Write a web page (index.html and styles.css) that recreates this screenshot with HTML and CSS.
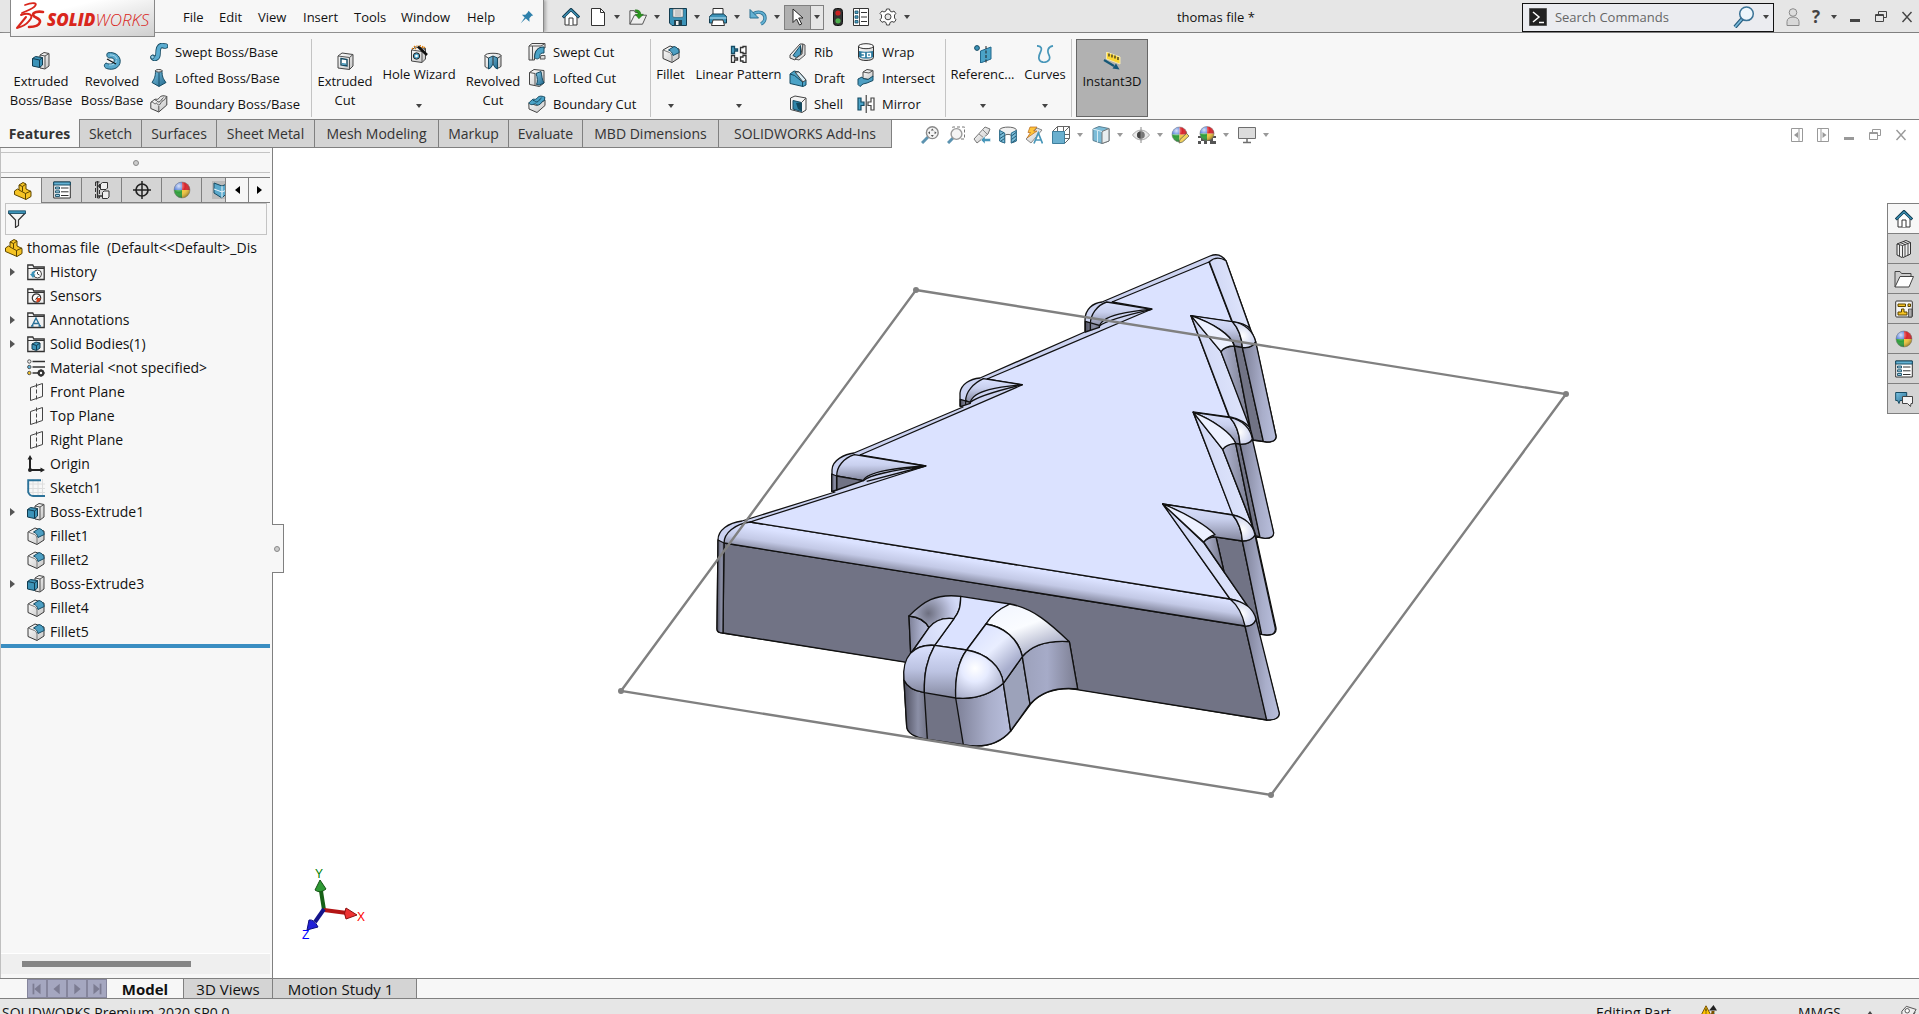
FILE: index.html
```html
<!DOCTYPE html>
<html lang="en">
<head>
<meta charset="utf-8">
<title>SOLIDWORKS - thomas file</title>
<link rel="stylesheet" href="styles.css">
</head>
<body>
<svg class="defs" aria-hidden="true">
  <defs>
    <linearGradient id="blue" x1="0" y1="0" x2="1" y2="1"><stop offset="0" stop-color="#7cc4e4"/><stop offset="1" stop-color="#22688c"/></linearGradient>
    <linearGradient id="grey" x1="0" y1="0" x2="1" y2="1"><stop offset="0" stop-color="#ffffff"/><stop offset="1" stop-color="#c4c4c4"/></linearGradient>
    <linearGradient id="logoBg" x1="0" y1="0" x2="1" y2="1"><stop offset=".3" stop-color="#ffffff"/><stop offset="1" stop-color="#cfcfcf"/></linearGradient>
    <radialGradient id="shine" cx=".3" cy=".25" r=".8"><stop offset="0" stop-color="#fff" stop-opacity=".8"/><stop offset=".5" stop-color="#fff" stop-opacity="0"/><stop offset="1" stop-color="#000" stop-opacity=".35"/></radialGradient>
  </defs>
  <symbol id="i-extrude" viewBox="0 0 18 18"><path d="M8 3l4-2.500 5 1v12.500l-4 3-5-1z" fill="url(#grey)" stroke="#444"/><path d="M13 4v12.500M8 3l5 1 4-2.500" fill="none" stroke="#555"/><path d="M.5 6.500l3-2 7 1v7.500l-3 2.500-7-1.500z" fill="#3c93b8" stroke="#123c50"/><path d="M.5 6.500l7 1.500 3-2.500M7.500 8v7.500" fill="none" stroke="#123c50"/></symbol>
  <symbol id="i-revolve" viewBox="0 0 18 18"><path d="M5 .8C12-.5 17.500 4 17.200 9.500 17 15 11 19 3.500 16.500c-2.500-1-3-4-.5-5.500 4 2 7 1 8-1.500.8-2.500-1-4-4.500-3.500C3.500 6 3 1.500 5 .8z" fill="#59a9cc" stroke="#164b63"/><path d="M6 13c4 .5 7-1.500 7.500-4.500M7 3c3-.3 6 1 7 4" fill="none" stroke="#a8d8ec"/><path d="M4 7l9 5" stroke="#111" stroke-width="1.200"/></symbol>
  <symbol id="i-swept" viewBox="0 0 18 18"><path d="M3 14.500c2 2 5 .5 5-3.500 0-5 .5-8 3.500-8.500 2-.3 2.500 1 4 .5" fill="none" stroke="#164b63" stroke-width="5.500" stroke-linecap="round"/><path d="M3 14.500c2 2 5 .5 5-3.500 0-5 .5-8 3.500-8.500 2-.3 2.500 1 4 .5" fill="none" stroke="#5bacd0" stroke-width="3.800" stroke-linecap="round"/><circle cx="2.500" cy="14" r="1.800" fill="#9ad1e8" stroke="#164b63" stroke-width=".7"/></symbol>
  <symbol id="i-loft" viewBox="0 0 18 18"><path d="M5.500 1.500h6.500c0 6 1 8 4 12l-7 4-7-4c2.500-4 3.500-6 3.500-12z" fill="url(#blue)" stroke="#164b63"/><ellipse cx="8.800" cy="1.800" rx="3.300" ry="1.300" fill="#eee" stroke="#444"/><path d="M9 4v13" stroke="#18506c"/></symbol>
  <symbol id="i-boundary" viewBox="0 0 18 18"><path d="M.8 7.500l3-2.500c2-2 3 .5 5-1.500 1.500-2.500 4-3.500 8-2v8.500l-8 7-8-3.500z" fill="url(#grey)" stroke="#444"/><path d="M.8 7.500c2-2 3.500 2.500 5 1s2 2.500 3.500 1.500 2-4 4-4.500 2-3 3.500-4M5 5c2-.5 2 2.500 4 2s2.500-3 4.500-4.500M8.800 11v6" fill="none" stroke="#555"/></symbol>
  <symbol id="i-excut" viewBox="0 0 18 18"><path d="M2 4l4-3 11 1.500V14l-3.500 3.500L2 16z" fill="url(#grey)" stroke="#444"/><path d="M2 4l11.500 1.500L17 2.500M13.500 5.500v12" fill="none" stroke="#555"/><path d="M5 6.500l6 1v6.500l-6-1z" fill="#fff" stroke="#164b63" stroke-width="1.400"/><path d="M6 11l4 .5v1.500l-4-.5z" fill="#3c93b8"/></symbol>
  <symbol id="i-hole" viewBox="0 0 18 18"><path d="M1.500 5l4-3 10 1.500V14L12 17.500 1.500 16z" fill="url(#grey)" stroke="#444"/><path d="M1.500 5L12 6.500l3.500-3M12 6.500v11" fill="none" stroke="#555"/><circle cx="6.500" cy="11" r="3.200" fill="#4ba3c7" stroke="#222"/><circle cx="6.500" cy="11" r="1.300" fill="#fff"/><path d="M8 1.500l9 8.500" stroke="#111" stroke-width="2.600"/><path d="M4 1l1 1M7 .5v1M10 0l.5 1.500M13 1l-1 2M2 3l1 1M5 4l1-1M14 3l1-1" stroke="#e07b00" stroke-width="1.300"/></symbol>
  <symbol id="i-revcut" viewBox="0 0 18 18"><path d="M1 3.500C1 .500 17 .500 17 3.500V14c0 1.500-3 2-4.500 2.500L9 9l-3.500 7.500C3 16 1 15.500 1 14z" fill="url(#grey)" stroke="#444"/><path d="M4.500 6L9 4l4.500 2v11L11 15.500 9 12l-2 3.500L4.500 17z" fill="url(#blue)" stroke="#164b63"/><path d="M9 4v8M1 3.500C2 5 4 6 4.500 6M17 3.500C16 5 14 6 13.500 6" fill="none" stroke="#333"/></symbol>
  <symbol id="i-swcut" viewBox="0 0 18 18"><path d="M1 17V3l3-2.500h13V5h-3v-.5C8 5 6.500 9 6.500 17z" fill="url(#grey)" stroke="#444"/><path d="M1 3h12l4-2.500M4.500 3v14" fill="none" stroke="#555"/><path d="M16 4C9.500 4 7 8 6.500 14.500c3 3 5.500.5 5.500-2 0-2 1-2.500 4-2.500z" fill="#4ba3c7" stroke="#164b63"/><path d="M13 12.500h4v3.500h-5z" fill="#ddd" stroke="#555"/></symbol>
  <symbol id="i-locut" viewBox="0 0 18 18"><path d="M1.500 3.500l4.500-3 10 1V14l-4.500 3.500-10-2z" fill="url(#grey)" stroke="#444"/><path d="M1.500 3.500L7 4.500v12" fill="none" stroke="#555"/><path d="M8 4.500l5-2c1 5 1 8 3 11.500l-4.500 2-3-.5c1.500-3 1-7-.5-11z" fill="url(#blue)" stroke="#164b63"/></symbol>
  <symbol id="i-bocut" viewBox="0 0 18 18"><path d="M.8 8l8 2.500L17 5v5.500l-8 7-8-3.500z" fill="url(#grey)" stroke="#444"/><path d="M.8 8l3-3c2-2 3 .5 5-1.500 1.500-2.500 4-3 8-1.500l-.3 3.500c-3 0-3 4-6 4.500-2 .5-2-1.500-4-1S3 10.500.8 8z" fill="#4ba3c7" stroke="#164b63"/><path d="M5 5.500c2-.5 2 2 4 1.500s2.500-3 4.500-4" fill="none" stroke="#164b63"/></symbol>
  <symbol id="i-fillet" viewBox="0 0 18 18"><path d="M1 5l7-4 9 3v9l-7 4.500L1 13.500z" fill="url(#grey)" stroke="#3a3a3a"/><path d="M1 5l6.500 2.500c1.500 1 2 2 2.500 3.500v6" fill="none" stroke="#777"/><path d="M6.500 5L12 1.500c3 .5 5 3 5.200 6L11 10.500C10.500 8 9 5.800 6.500 5z" fill="#4d9fc3" stroke="#164b63"/></symbol>
  <symbol id="i-pattern" viewBox="0 0 18 18"><path d="M1.500 1.500h3v2.500h3v2h-3v2.500h-3z" fill="#4ba3c7" stroke="#164b63" stroke-width="1.300"/><path d="M10.500 2.500h2.500v-1h3v7h-3v-1h-2.500zM1.500 10.500h3v2.500h3v2h-3v2.500h-3zM10.500 12h2.500v-1.500h3v7h-3V16h-2.500z" fill="#fff" stroke="#333" stroke-width="1.300"/></symbol>
  <symbol id="i-rib" viewBox="0 0 18 18"><path d="M1 12l10-11h3l-2 10-6 6-5-2z" fill="url(#grey)" stroke="#444"/><path d="M4 12.500L11.500 2.500v9l-4 3z" fill="#4d9fc3" stroke="#164b63"/><path d="M14 1l2 1v10l-6 5-4-1 7-5z" fill="#ddd" stroke="#555"/></symbol>
  <symbol id="i-draft" viewBox="0 0 18 18"><path d="M1 5l4-3 5 1 7 8v5l-3 1.500L1 14.500z" fill="#4ba3c7" stroke="#164b63"/><path d="M1 5l4.500 1.500L13.500 13v4.500" fill="none" stroke="#164b63"/><path d="M6 3l4 0 7 8-3 2z" fill="#d8ecf5" stroke="#444"/></symbol>
  <symbol id="i-shell" viewBox="0 0 18 18"><path d="M1.500 3L6 1l11 2v12l-4 2.500L1.500 14.500z" fill="#f4f4f4" stroke="#444"/><path d="M4 5.500l8.500 2v9L4 14z" fill="#2f86ab" stroke="#164b63"/><path d="M7 8l5.500-.5V16L9 14z" fill="#12495f"/><path d="M12.500 7.500L17 3" stroke="#555"/></symbol>
  <symbol id="i-wrap" viewBox="0 0 18 18"><path d="M1.500 3v11.500c0 4 15 4 15 0V3" fill="url(#grey)" stroke="#333"/><ellipse cx="9" cy="3.200" rx="7.500" ry="2.500" fill="#fafafa" stroke="#333"/><path d="M2 8c4 1 10 1 14 0v6c-4 2-10 2-14 0z" fill="#2b7a9f"/><path d="M4.500 10.500h3v3h-3M10.500 10.500h3v3h-3z" fill="none" stroke="#fff" stroke-width="1.300"/></symbol>
  <symbol id="i-intersect" viewBox="0 0 18 18"><path d="M6 3l4-2.500 6 1v6l-4 3-6-1z" fill="url(#grey)" stroke="#444"/><path d="M1 10l4-2 1 1.500 5 1L16 7v4.500l-6 2.500-4 1-3 2.500-2-2z" fill="#4d9fc3" stroke="#164b63"/><path d="M6 3l6 1 4-2.500" fill="none" stroke="#555"/></symbol>
  <symbol id="i-mirror" viewBox="0 0 18 18"><path d="M1 3h3v4h3v3.500H4V15H1z" fill="#4ba3c7" stroke="#164b63" stroke-width="1.200"/><path d="M9.200 0v18" stroke="#222"/><path d="M17 3h-3v4h-3v3.500h3V15h3z" fill="#fff" stroke="#444" stroke-width="1.200"/></symbol>
  <symbol id="i-reference" viewBox="0 0 18 18"><circle cx="3" cy="3" r="2.400" fill="#3c93b8" stroke="#164b63"/><path d="M6.500 6L17 2v12l-10.500 4z" fill="#4ba3c7" stroke="#22688c"/><path d="M12 1v17" stroke="#222" stroke-dasharray="3 1.500"/></symbol>
  <symbol id="i-curves" viewBox="0 0 18 18"><path d="M1 .800c5 .2 5 3.200 3.500 6.200C2 12 2 16.500 7 17.200c5 .5 8-3 6-7-2-4-1.500-8.400 4-9.400" fill="none" stroke="#4796b9" stroke-width="1.700"/></symbol>
  <symbol id="i-instant" viewBox="0 0 18 18"><path d="M3.500 0L17 5v7L3.500 7z" fill="#ffd934" stroke="#f5e9b0"/><path d="M6 1.500v3M9 2.500v3M12 3.500v3M15 5v3" stroke="#222" stroke-width="1.200"/><path d="M1 8l10 6" stroke="#165877" stroke-width="2.200"/><path d="M16.500 17.500l-7-1 3.500-5z" fill="#165877"/></symbol>
  <symbol id="i-home" viewBox="0 0 18 18"><path d="M3 8v9h12V8L9 2.500z" fill="#fff" stroke="#333"/><path d="M7 17v-7h4v7" fill="#fff" stroke="#333"/><path d="M.8 9.500L9 1.500l8.200 8" fill="none" stroke="#123c50" stroke-width="3"/><path d="M1.500 9L9 1.800 16.500 9" fill="none" stroke="#3c93b8" stroke-width="1.300"/></symbol>
  <symbol id="i-new" viewBox="0 0 18 18"><path d="M2.500.5h9l4 4v13h-13z" fill="#fff" stroke="#333"/><path d="M11.500.5v4h4" fill="none" stroke="#333"/></symbol>
  <symbol id="i-open" viewBox="0 0 20 18"><path d="M1 17V2h5l1 2h5v3" fill="#f2f2f2" stroke="#444"/><path d="M1 17L6 7h13.500L15 17z" fill="#eee" stroke="#444"/><path d="M7 1c4 0 6 1.500 6 5h3l-5 5-4-5h3c0-2-1-3-3-3z" fill="#2b9a1e" stroke="#16660e" stroke-width=".6"/></symbol>
  <symbol id="i-save" viewBox="0 0 18 18"><path d="M.5.5h17v17H3L.5 15z" fill="#3c93b8" stroke="#123c50"/><path d="M4 1h10v8H4z" fill="#fff" stroke="#555" stroke-width=".6"/><path d="M5.500 3h7M5.500 5h7M5.500 7h7" stroke="#777" stroke-width=".8"/><path d="M5 12h8v5.500H5z" fill="#23424f"/><path d="M7 13h2.500v4H7z" fill="#eee"/></symbol>
  <symbol id="i-print" viewBox="0 0 18 18"><path d="M4 .5h10v7H4z" fill="#fff" stroke="#333"/><path d="M.5 8.500L3.500 6h11l3 2.500V15H.5z" fill="#3c93b8" stroke="#123c50"/><path d="M.5 10h17" stroke="#bfe3f2"/><path d="M4 12h10l1.500 5.500h-13z" fill="#fff" stroke="#333"/></symbol>
  <symbol id="i-undo" viewBox="0 0 18 18"><path d="M4 6c6-4 12-1 12 4 0 3-2 5-4 6" fill="none" stroke="#2b6f90" stroke-width="3.400"/><path d="M4 6c6-4 12-1 12 4 0 3-2 5-4 6" fill="none" stroke="#63b1d3" stroke-width="1.800"/><path d="M1 1.500V10h8.500z" fill="#63b1d3" stroke="#2b6f90"/></symbol>
  <symbol id="i-cursor" viewBox="0 0 18 18"><path d="M4 1v13.500l3.500-3.500 3 6 2.200-1-3-6H14z" fill="#fff" stroke="#222"/></symbol>
  <symbol id="i-traffic" viewBox="0 0 10 18"><rect x=".5" y=".5" width="9" height="17" rx="3" fill="#333" stroke="#111"/><circle cx="5" cy="5" r="2.600" fill="#c22"/><circle cx="5" cy="12.800" r="2.600" fill="#4fb04f"/></symbol>
  <symbol id="i-list" viewBox="0 0 18 18"><path d="M1.500.5h15v17h-15z" fill="#fff" stroke="#333"/><path d="M7.500 1v16" stroke="#555"/><path d="M3 3h3v2.500H3zM3 7.800h3v2.500H3zM3 12.500h3V15H3z" fill="#4ba3c7" stroke="#164b63" stroke-width=".8"/><path d="M9 4.500h6M9 9h6M9 13.500h6" stroke="#333"/></symbol>
  <symbol id="i-gear" viewBox="0 0 18 18"><path d="M7.500 1h3l.5 2 2 1 2-1 1.800 2.500L15.500 7v3l1.500 1.800-1.800 2.500-2.200-.8-2 1-.5 2.500h-3L7 14.500l-2-1-2 .8-2-2.500L2.500 10V7L1 5.500 3 3l2 1 2-1z" fill="#fff" stroke="#444"/><circle cx="9" cy="8.800" r="3" fill="#e6e6e6" stroke="#444"/></symbol>
  <symbol id="i-pin" viewBox="0 0 18 18"><path d="M11 1l6 6-2 .5-3 3 .2 4.500L7.500 11 1 17l5-7.500L2.500 6 7 6l3-3z" fill="#2e80ab"/></symbol>
  <symbol id="i-prompt" viewBox="0 0 18 18"><path d="M.5.5h17v17H.5z" fill="#222" stroke="#555"/><path d="M4 4l6 5-6 5" fill="none" stroke="#fff" stroke-width="1.500"/><path d="M10 14.500h5" stroke="#fff" stroke-width="1.500"/></symbol>
  <symbol id="i-search" viewBox="0 0 22 22"><path d="M9 13l-7 8" stroke="#24597a" stroke-width="4"/><path d="M9 13l-7 8" stroke="#79b9da" stroke-width="1.800"/><circle cx="13.500" cy="7.800" r="6.800" fill="#eef6fb" stroke="#3b7396" stroke-width="1.500"/></symbol>
  <symbol id="i-user" viewBox="0 0 14 18"><circle cx="7" cy="4.500" r="3.800" fill="#ddd" stroke="#8a8a8a"/><path d="M1 17.500v-4c0-6 12-6 12 0v4z" fill="#d8d8d8" stroke="#8a8a8a"/></symbol>
  <symbol id="i-min" viewBox="0 0 12 12"><path d="M1 9.500h10" stroke="currentColor" stroke-width="3"/></symbol>
  <symbol id="i-restore" viewBox="0 0 12 12"><path d="M3.500 3.500v-3h8v6h-3M.5 3.500h8v7h-8zM.5 4.500h8" fill="none" stroke="currentColor"/></symbol>
  <symbol id="i-close" viewBox="0 0 12 12"><path d="M1.500 1l9 10M10.500 1l-9 10" stroke="currentColor" stroke-width="1.400"/></symbol>
  <symbol id="i-zoomfit" viewBox="0 0 18 18"><path d="M7 11l-6 6" stroke="#5c93b0" stroke-width="3"/><circle cx="11.300" cy="6.700" r="5.900" fill="#f4f4f4" stroke="#8a8a8a" stroke-width="1.400"/><path d="M11.300 2.500l1.500 2h-3zM11.300 11l1.500-2h-3zM7 6.700l2-1.500v3zM15.600 6.700l-2-1.500v3z" fill="#555"/></symbol>
  <symbol id="i-zoomarea" viewBox="0 0 18 18"><path d="M5.500 1.500V1h12v12H14" fill="none" stroke="#777" stroke-dasharray="3 2"/><path d="M6 12l-5 5" stroke="#5c93b0" stroke-width="3"/><circle cx="9.500" cy="8" r="5.400" fill="#f4f4f4" stroke="#999" stroke-width="1.400"/></symbol>
  <symbol id="i-prev" viewBox="0 0 18 18"><path d="M1 13L12 1l5 2-2 5-11 9z" fill="url(#grey)" stroke="#777"/><path d="M6 8l5 4M10 4l4 4" stroke="#888"/><path d="M8 14l4-4v2.500h5.500v3H12V18z" fill="#4796b9" stroke="#fff" stroke-width=".5"/></symbol>
  <symbol id="i-section" viewBox="0 0 18 18"><path d="M.7 3.500C3 .3 15 .3 17.300 3.500V15l-5 2V9.500c-1-1.500-5.600-1.500-6.600 0V17l-5-2z" fill="#f1f1f1" stroke="#666"/><path d="M.7 4.500l5 2.500v10l-5-2zM17.300 4.500l-5 2.500v10l5-2z" fill="#7bbdd9" stroke="#2b6f90"/><path d="M1 9l4-2.500M1 12.500l4.500-3M2 15l3.500-2.500M12.500 10L17 6.500M12.500 13.500L17 10M13 16.500l4-3" stroke="#245a74"/></symbol>
  <symbol id="i-annot" viewBox="0 0 18 18"><path d="M1 13L12 2l5 2-11 13z" fill="url(#grey)" stroke="#888"/><path d="M5 1h7L8.500 5H12L2 12l3.500-5.500H3z" fill="#ffc53a" stroke="#b5651d" stroke-width=".7"/><path d="M9 17.500L13.300 7 17.500 17.500M10.500 14h5.500" fill="none" stroke="#4796b9" stroke-width="1.700"/></symbol>
  <symbol id="i-orient" viewBox="0 0 18 18"><path d="M5.500 5.500V.5h12v12h-5M.5 5.500l5-5M12.500 5.500l5-5M12.500 17.500l5-5M11.500 0v18M6 8.500h12" fill="none" stroke="#666"/><path d="M.5 5.500h12v12H.5z" fill="#6bb0cf" stroke="#3f7f9d"/></symbol>
  <symbol id="i-display" viewBox="0 0 18 18"><path d="M1 3l6-2.500 10 2V15l-7 2.500-9-3z" fill="#7cbcd8" stroke="#5b7f90"/><path d="M10 5.500l7-3V15l-7 2.500z" fill="#e9eef0" stroke="#777"/><path d="M1 3l9 2.500M5.500 4.500v12" fill="none" stroke="#d5ecf5"/></symbol>
  <symbol id="i-eye" viewBox="0 0 18 18"><path d="M.5 9C5 2.500 13 2.500 17.500 9 13 15.500 5 15.500.5 9z" fill="#e9e9e9" stroke="#aaa"/><circle cx="9" cy="9" r="3.800" fill="#777"/><path d="M9 1v16" stroke="#888"/><path d="M8.500 5.500a3.500 3.500 0 000 7z" fill="#444"/></symbol>
  <symbol id="i-ball" viewBox="0 0 18 18"><path d="M9 9V1A8 8 0 001 9z" fill="#3f6fd8"/><path d="M9 9H1a8 8 0 008 8z" fill="#2f9e3a"/><path d="M9 9v8a8 8 0 008-8z" fill="#f2c63c"/><path d="M9 9h8a8 8 0 00-8-8z" fill="#d8232a"/><circle cx="9" cy="9" r="8" fill="url(#shine)" stroke="#777" stroke-width=".5"/></symbol>
  <symbol id="i-ballpen" viewBox="0 0 18 18"><use href="#i-ball" width="17" height="17"/><path d="M8 17l1-3.500 6.500-6L18 10l-6.500 6z" fill="#f4d35e" stroke="#665" stroke-width=".8"/></symbol>
  <symbol id="i-scene" viewBox="0 0 18 18"><path d="M0 10h18v8H0z" fill="#555"/><path d="M0 12h3v3H0zM15 12h3v3h-3zM3 15h3v3H3zM9 15h3v3H9z" fill="#fff"/><use href="#i-ball" x="1" y="-.5" width="16" height="16"/></symbol>
  <symbol id="i-monitor" viewBox="0 0 18 18"><path d="M.5 1.500h17v11H.5z" fill="#dcdcdc" stroke="#6e6e6e"/><path d="M9 13v3.500M5 16.500h8" stroke="#6e6e6e" stroke-width="1.500"/></symbol>
  <symbol id="i-panel-l" viewBox="0 0 12 14"><path d="M.5.5h11v13H.5zM8 .500v13" fill="none" stroke="#999"/><path d="M7 4v6L3 7z" fill="#999"/></symbol>
  <symbol id="i-panel-r" viewBox="0 0 12 14"><path d="M.5.5h11v13H.5zM4 .500v13" fill="none" stroke="#999"/><path d="M5.500 4v6l4-3z" fill="#999"/></symbol>
  <symbol id="i-part" viewBox="0 0 18 18"><path d="M.5 9l3-2 1.500.8V3l4-2.500 3 1.500v5l5 2.500v5L12 17.500.5 12.500z" fill="#f5c324" stroke="#5d4500"/><path d="M5 8l6.500 3.500v6M11.500 11.500L17 9M5 3l3.500 1.500v5M8.500 4.500L12 2" fill="none" stroke="#5d4500"/></symbol>
  <symbol id="i-props" viewBox="0 0 18 18"><path d="M.7 1h16.600v16H.7z" fill="#fff" stroke="#333"/><path d="M.7 1h16.600v3H.7z" fill="#63b1d3" stroke="#164b63"/><path d="M2.500 6h4v2h-4zM2.500 9.800h4v2h-4zM2.500 13.500h4v2h-4z" fill="#9bd0e6" stroke="#164b63" stroke-width=".9"/><path d="M8 7h7.500M8 10.800h7.500M8 14.500h7.500" stroke="#333"/></symbol>
  <symbol id="i-config" viewBox="0 0 18 18"><path d="M4.500 0v17M4 5h4M4 15h6" fill="none" stroke="#333" stroke-width="1.400"/><path d="M7.500 3l2-1.500h5V7l-1.500 1.500H7.500zM9.500 11.500l1.500-1.500h5v6l-1.500 1.500h-5z" fill="#eee" stroke="#333"/><path d="M2.500 1h4v16h-4z" fill="none" stroke="#333" stroke-dasharray="4 2"/></symbol>
  <symbol id="i-target" viewBox="0 0 18 18"><circle cx="9" cy="9" r="6" fill="none" stroke="#222" stroke-width="1.700"/><path d="M9 0v18M0 9h18" stroke="#222" stroke-width="1.500"/></symbol>
  <symbol id="i-cam" viewBox="0 0 18 18"><path d="M0 0h18v18H0z" fill="#bbb"/><path d="M2 2l8 3 7-3v8l-7 7-8-5z" fill="#5aa9cc" stroke="#164b63"/><path d="M2 8l8 3 7-3M10 5v12" fill="none" stroke="#e8f4fa"/></symbol>
  <symbol id="i-filter" viewBox="0 0 18 18"><path d="M.7 3L7.500 10v7.500l3-2V10L17.300 3z" fill="#f4f4f4" stroke="#333" stroke-width="1.200"/><path d="M.5.800h17v2.700H.5z" fill="#3c93b8" stroke="#164b63" stroke-width=".8"/></symbol>
  <symbol id="i-folder" viewBox="0 0 18 18"><path d="M.8 16.500V2h5l1 2h10.400v12.500z" fill="#f2f2f2" stroke="#333" stroke-width="1.300"/><path d="M1 5.500h16" stroke="#333"/></symbol>
  <symbol id="i-history" viewBox="0 0 18 18"><use href="#i-folder" width="18" height="18"/><circle cx="10.500" cy="11" r="4" fill="#fff" stroke="#444"/><path d="M10.500 9v2l2 1" fill="none" stroke="#444"/><path d="M3 11l3 4 2.500-3.500H7c0-2 1-3 2-3.500-3-.5-5 1-4.500 3z" fill="#3c93b8"/></symbol>
  <symbol id="i-sensor" viewBox="0 0 18 18"><use href="#i-folder" width="18" height="18"/><circle cx="9.500" cy="11" r="4.200" fill="#fff" stroke="#333" stroke-width="1.200"/><path d="M9.500 11l4.200 0a4.200 4.200 0 01-4.200 4.200z" fill="#e0431c"/><path d="M8.500 12.500l3-3.500" stroke="#222"/></symbol>
  <symbol id="i-annotations" viewBox="0 0 18 18"><use href="#i-folder" width="18" height="18"/><path d="M5 15L9 7l4 8M6.500 12.500h5M4 15h2.500M11.500 15H14" fill="none" stroke="#2b7299" stroke-width="1.400"/></symbol>
  <symbol id="i-bodies" viewBox="0 0 18 18"><use href="#i-folder" width="18" height="18"/><path d="M5 9l4-2 4 1v5l-3.500 2.500L5 14z" fill="#3c93b8" stroke="#123c50"/><path d="M5 9l4.500 1.500L13 8M9.500 10.500V15" fill="none" stroke="#123c50"/></symbol>
  <symbol id="i-material" viewBox="0 0 18 18"><path d="M5.500 2.500H18M5.500 8H18M5.500 14H11" stroke="#333" stroke-width="1.700"/><circle cx="2.300" cy="2.500" r="1.700" fill="#eee" stroke="#555"/><circle cx="2.300" cy="8" r="1.700" fill="#5bb5dd" stroke="#555"/><circle cx="2.300" cy="14" r="1.700" fill="#f5c324" stroke="#555"/><circle cx="14" cy="14" r="2.300" fill="none" stroke="#333" stroke-width="2.200"/><path d="M14 10v8M10 14h8" stroke="#333" stroke-dasharray="2 4"/></symbol>
  <symbol id="i-plane" viewBox="0 0 18 18"><path d="M3.500 4.500l12-4v13l-12 4z" fill="none" stroke="#444"/><path d="M9.500.500v17.500" stroke="#444" stroke-dasharray="4 2"/></symbol>
  <symbol id="i-origin" viewBox="0 0 18 18"><path d="M3 3v12h13" fill="none" stroke="#222" stroke-width="2"/><path d="M3 0l2.500 4.500h-5zM18 15l-4.500-2.500v5z" fill="#222"/><circle cx="3" cy="15" r="2" fill="#222"/></symbol>
  <symbol id="i-sketch" viewBox="0 0 18 18"><path d="M6 0v18M11 0v18M15.500 0v18M0 5h18M0 9.500h18M0 13.500h18" stroke="#dedede"/><path d="M14 1.200H1.200V13c1 3 3 4 5 4H18" fill="none" stroke="#2b7299" stroke-width="1.900"/></symbol>
  <symbol id="i-books" viewBox="0 0 18 18"><path d="M2 4l9-3.500 4.500 2V14l-8 3.800L2 15z" fill="#eee" stroke="#333"/><path d="M2 4l5.500 1.500 8-3M5 2.500l5 2v12M8 1.500l5 2v12M7.500 5.500V17M4.500 5v11" fill="none" stroke="#333" stroke-width=".9"/></symbol>
  <symbol id="i-explorer" viewBox="0 0 20 18"><path d="M1 17V1.500h5l1.500 2H17V7" fill="#ccc" stroke="#444"/><path d="M1 17L6 6.500h13.500L15 17z" fill="#fff" stroke="#444"/></symbol>
  <symbol id="i-palette" viewBox="0 0 18 18"><rect x=".7" y="1" width="16.600" height="16" rx="1" fill="#f4f4f4" stroke="#333"/><path d="M3 4h7.500v2.500H3zM13 4h2.500v2.500H13zM6.500 9h2.500v3h3v3H3v-3h3.500z" fill="#f5c324" stroke="#5d4500"/><path d="M13.500 9h3.500v8h-3.500z" fill="#aaa" stroke="#333" stroke-width=".7"/></symbol>
  <symbol id="i-forum" viewBox="0 0 18 18"><path d="M.7 2.500h11v8H5L4 13.500 2.500 10.500H.7z" fill="url(#blue)" stroke="#164b63"/><path d="M7.500 6.500h10v7H16l-.5 3-3-3h-5z" fill="#f4f4f4" stroke="#444"/></symbol>
  <symbol id="i-warn" viewBox="0 0 16 16"><path d="M.5 9.500L5 .800l4.500 8.700z" fill="#ffc400" stroke="#7a5200"/><path d="M5 3.500v3M5 7.500v1" stroke="#111"/><path d="M1 12c7 2 11 0 11-6" fill="none" stroke="#7a5200" stroke-width="3"/><path d="M8 5.500L12.500 0 16 5.500z" fill="#222"/><path d="M10 11l4-3v6z" fill="#3c93b8"/></symbol>
  <symbol id="i-tag" viewBox="0 0 18 16"><path d="M1 6l5-5.500L17 4l-6 10L1 9.500z" fill="#eee" stroke="#444"/><circle cx="7" cy="5.500" r="2.500" fill="#fff" stroke="#444"/><path d="M1 9.500v3l9 3.500 6-9" fill="none" stroke="#444"/></symbol>
</svg>

<div class="app">
  <header class="title-bar">
    <div class="menu-side">
      <div class="logo">
        <svg viewBox="0 0 143 36" role="img" aria-label="DS SOLIDWORKS logo">
          <path d="M0 0h143v36H0z" fill="url(#logoBg)"/>
          <g fill="none" stroke="#d9261c" stroke-linecap="round" stroke-linejoin="round">
            <path d="M14 5C22 2 27 3 24 6 22 9 15 11 11 13" stroke-width="1.800"/>
            <path d="M10 15C18 12 24 15 18 21 15 25 10 27 6 28L15 17" stroke-width="2"/>
            <path d="M32 12C27 11 22 12 22 15 23 18 30 18 29 22 28 26 23 27 18 27" stroke-width="2.600"/>
          </g>
          <text x="36" y="26" class="logo-text"><tspan class="logo-bold">SOLID</tspan>WORKS</text>
        </svg>
      </div>
      <nav class="menus">
        <button>File</button><button>Edit</button><button>View</button><button>Insert</button><button>Tools</button><button>Window</button><button>Help</button>
      </nav>
      <button class="pin" aria-label="Pin menu"><svg class="ic14"><use href="#i-pin"/></svg></button>
    </div>
    <div class="quick">
      <button aria-label="Home"><svg class="ic"><use href="#i-home"/></svg></button>
      <button aria-label="New" class="drop"><svg class="ic"><use href="#i-new"/></svg><i class="caret"></i></button>
      <button aria-label="Open" class="drop"><svg class="ic"><use href="#i-open"/></svg><i class="caret"></i></button>
      <button aria-label="Save" class="drop"><svg class="ic"><use href="#i-save"/></svg><i class="caret"></i></button>
      <button aria-label="Print" class="drop"><svg class="ic"><use href="#i-print"/></svg><i class="caret"></i></button>
      <button aria-label="Undo" class="drop"><svg class="ic"><use href="#i-undo"/></svg><i class="caret"></i></button>
      <button aria-label="Select" class="select-tool"><span><svg class="ic"><use href="#i-cursor"/></svg></span><i class="caret"></i></button>
      <button aria-label="Rebuild"><svg class="ic10"><use href="#i-traffic"/></svg></button>
      <button aria-label="File properties"><svg class="ic"><use href="#i-list"/></svg></button>
      <button aria-label="Options" class="drop"><svg class="ic"><use href="#i-gear"/></svg><i class="caret"></i></button>
    </div>
    <h1 class="doc-title">thomas file *</h1>
    <div class="title-right">
      <form class="search">
        <svg class="ic"><use href="#i-prompt"/></svg>
        <input type="text" placeholder="Search Commands" aria-label="Search Commands">
        <button type="button" aria-label="Search"><svg class="ic22"><use href="#i-search"/></svg><i class="caret"></i></button>
      </form>
      <button aria-label="Account"><svg class="user"><use href="#i-user"/></svg></button>
      <button class="help" aria-label="Help">?<i class="caret"></i></button>
      <div class="win-controls">
        <button aria-label="Minimize"><svg class="ic12"><use href="#i-min"/></svg></button>
        <button aria-label="Restore"><svg class="ic12"><use href="#i-restore"/></svg></button>
        <button aria-label="Close"><svg class="ic12"><use href="#i-close"/></svg></button>
      </div>
    </div>
  </header>

  <section class="ribbon" aria-label="Features ribbon">
    <div class="group boss">
      <button class="big"><svg class="ic"><use href="#i-extrude"/></svg>Extruded<br>Boss/Base</button>
      <button class="big"><svg class="ic"><use href="#i-revolve"/></svg>Revolved<br>Boss/Base</button>
      <div class="stack">
        <button><svg class="ic"><use href="#i-swept"/></svg>Swept Boss/Base</button>
        <button><svg class="ic"><use href="#i-loft"/></svg>Lofted Boss/Base</button>
        <button><svg class="ic"><use href="#i-boundary"/></svg>Boundary Boss/Base</button>
      </div>
    </div>
    <div class="group cut">
      <button class="big"><svg class="ic"><use href="#i-excut"/></svg>Extruded<br>Cut</button>
      <button class="big menu"><svg class="ic"><use href="#i-hole"/></svg>Hole Wizard<i class="caret"></i></button>
      <button class="big"><svg class="ic"><use href="#i-revcut"/></svg>Revolved<br>Cut</button>
      <div class="stack">
        <button><svg class="ic"><use href="#i-swcut"/></svg>Swept Cut</button>
        <button><svg class="ic"><use href="#i-locut"/></svg>Lofted Cut</button>
        <button><svg class="ic"><use href="#i-bocut"/></svg>Boundary Cut</button>
      </div>
    </div>
    <div class="group modify">
      <button class="big menu"><svg class="ic"><use href="#i-fillet"/></svg>Fillet<i class="caret"></i></button>
      <button class="big menu"><svg class="ic"><use href="#i-pattern"/></svg>Linear Pattern<i class="caret"></i></button>
      <div class="stack">
        <button><svg class="ic"><use href="#i-rib"/></svg>Rib</button>
        <button><svg class="ic"><use href="#i-draft"/></svg>Draft</button>
        <button><svg class="ic"><use href="#i-shell"/></svg>Shell</button>
      </div>
      <div class="stack">
        <button><svg class="ic"><use href="#i-wrap"/></svg>Wrap</button>
        <button><svg class="ic"><use href="#i-intersect"/></svg>Intersect</button>
        <button><svg class="ic"><use href="#i-mirror"/></svg>Mirror</button>
      </div>
    </div>
    <div class="group refs">
      <button class="big menu"><svg class="ic"><use href="#i-reference"/></svg>Referenc...<i class="caret"></i></button>
      <button class="big menu"><svg class="ic"><use href="#i-curves"/></svg>Curves<i class="caret"></i></button>
    </div>
    <button class="big instant" aria-pressed="true"><svg class="ic"><use href="#i-instant"/></svg>Instant3D</button>
  </section>

  <div class="tab-row">
    <nav class="tabs">
      <button class="active">Features</button><button>Sketch</button><button>Surfaces</button><button>Sheet Metal</button><button>Mesh Modeling</button><button>Markup</button><button>Evaluate</button><button>MBD Dimensions</button><button>SOLIDWORKS Add-Ins</button>
    </nav>
    <div class="view-tools">
      <button aria-label="Zoom to fit"><svg class="ic"><use href="#i-zoomfit"/></svg></button>
      <button aria-label="Zoom to area"><svg class="ic"><use href="#i-zoomarea"/></svg></button>
      <button aria-label="Previous view"><svg class="ic"><use href="#i-prev"/></svg></button>
      <button aria-label="Section view"><svg class="ic"><use href="#i-section"/></svg></button>
      <button aria-label="Annotation views"><svg class="ic"><use href="#i-annot"/></svg></button>
      <button aria-label="View orientation" class="drop"><svg class="ic"><use href="#i-orient"/></svg><i class="caret"></i></button>
      <button aria-label="Display style" class="drop"><svg class="ic"><use href="#i-display"/></svg><i class="caret"></i></button>
      <button aria-label="Hide or show items" class="drop"><svg class="ic"><use href="#i-eye"/></svg><i class="caret"></i></button>
      <button aria-label="Edit appearance"><svg class="ic"><use href="#i-ballpen"/></svg></button>
      <button aria-label="Apply scene" class="drop"><svg class="ic"><use href="#i-scene"/></svg><i class="caret"></i></button>
      <button aria-label="View settings" class="drop"><svg class="ic"><use href="#i-monitor"/></svg><i class="caret"></i></button>
    </div>
    <div class="doc-controls">
      <button aria-label="Expand left"><svg class="ic12 tall"><use href="#i-panel-l"/></svg></button>
      <button aria-label="Expand right"><svg class="ic12 tall"><use href="#i-panel-r"/></svg></button>
      <button aria-label="Minimize document"><svg class="ic12"><use href="#i-min"/></svg></button>
      <button aria-label="Restore document"><svg class="ic12"><use href="#i-restore"/></svg></button>
      <button aria-label="Close document"><svg class="ic12"><use href="#i-close"/></svg></button>
    </div>
  </div>

  <main class="workspace">
    <aside class="tree-panel">
      <div class="handle"><i class="dot"></i></div>
      <nav class="panel-tabs">
        <button class="active" aria-label="Feature tree"><svg class="ic"><use href="#i-part"/></svg></button>
        <button aria-label="Properties"><svg class="ic"><use href="#i-props"/></svg></button>
        <button aria-label="Configurations"><svg class="ic"><use href="#i-config"/></svg></button>
        <button aria-label="Dimensions"><svg class="ic"><use href="#i-target"/></svg></button>
        <button aria-label="Display"><svg class="ic"><use href="#i-ball"/></svg></button>
        <button class="clipped" aria-label="CAM"><svg class="ic"><use href="#i-cam"/></svg></button>
        <button class="nudge" aria-label="Previous tabs"><i class="tri left"></i></button>
        <button class="nudge" aria-label="Next tabs"><i class="tri right"></i></button>
      </nav>
      <label class="filter"><svg class="ic"><use href="#i-filter"/></svg><input type="text" aria-label="Filter tree"></label>
      <div class="tree-root"><svg class="ic"><use href="#i-part"/></svg>thomas file&nbsp; (Default&lt;&lt;Default&gt;_Dis</div>
      <ul class="tree">
        <li class="more"><svg class="ic"><use href="#i-history"/></svg>History</li>
        <li><svg class="ic"><use href="#i-sensor"/></svg>Sensors</li>
        <li class="more"><svg class="ic"><use href="#i-annotations"/></svg>Annotations</li>
        <li class="more"><svg class="ic"><use href="#i-bodies"/></svg>Solid Bodies(1)</li>
        <li><svg class="ic"><use href="#i-material"/></svg>Material &lt;not specified&gt;</li>
        <li><svg class="ic"><use href="#i-plane"/></svg>Front Plane</li>
        <li><svg class="ic"><use href="#i-plane"/></svg>Top Plane</li>
        <li><svg class="ic"><use href="#i-plane"/></svg>Right Plane</li>
        <li><svg class="ic"><use href="#i-origin"/></svg>Origin</li>
        <li><svg class="ic"><use href="#i-sketch"/></svg>Sketch1</li>
        <li class="more"><svg class="ic"><use href="#i-extrude"/></svg>Boss-Extrude1</li>
        <li><svg class="ic"><use href="#i-fillet"/></svg>Fillet1</li>
        <li><svg class="ic"><use href="#i-fillet"/></svg>Fillet2</li>
        <li class="more"><svg class="ic"><use href="#i-extrude"/></svg>Boss-Extrude3</li>
        <li><svg class="ic"><use href="#i-fillet"/></svg>Fillet4</li>
        <li><svg class="ic"><use href="#i-fillet"/></svg>Fillet5</li>
      </ul>
      <div class="rollback"></div>
      <div class="scroll"><i></i></div>
    </aside>

    <section class="viewport" aria-label="Graphics area">
      <svg class="scene" viewBox="273 148 1646 830" role="img" aria-label="Christmas tree solid model">
        <defs>
          <linearGradient id="frontF" gradientUnits="userSpaceOnUse" x1="990" y1="561" x2="986" y2="587"><stop offset=".1" stop-color="#dbe2ff"/><stop offset=".55" stop-color="#c3c9e6"/><stop offset="1" stop-color="#7b7e94"/></linearGradient>
          <linearGradient id="col" x1="0" x2="1"><stop offset="0" stop-color="#7d8097"/><stop offset=".6" stop-color="#a9aeca"/><stop offset="1" stop-color="#b9bfdd"/></linearGradient>
          <linearGradient id="colL" x1="0" x2="1"><stop offset="0" stop-color="#4f5060"/><stop offset=".6" stop-color="#8b8fa6"/><stop offset="1" stop-color="#717385"/></linearGradient>
          <linearGradient id="inner" x1="0" x2="1"><stop offset="0" stop-color="#b2b7d3"/><stop offset="1" stop-color="#717385"/></linearGradient>
          <linearGradient id="sweep" x1="0" x2="1"><stop offset="0" stop-color="#9ca1bb"/><stop offset=".45" stop-color="#a6abc8"/><stop offset="1" stop-color="#7b7d91"/></linearGradient>
          <linearGradient id="capV" x1="0" x2="0" y1="0" y2="1"><stop offset="0" stop-color="#dbe2ff"/><stop offset=".4" stop-color="#c9d0ee"/><stop offset="1" stop-color="#83869d"/></linearGradient>
          <radialGradient id="ballG" cx=".45" cy=".55" r=".6"><stop offset="0" stop-color="#ffffff"/><stop offset="1" stop-color="#c6cdec"/></radialGradient>
          <linearGradient id="strip" x1="0" x2="1" y1=".7" y2=".3"><stop offset="0" stop-color="#ccd3f2"/><stop offset="1" stop-color="#e4eaff"/></linearGradient>
          <linearGradient id="dome" x1="0" x2="0" y1="0" y2="1"><stop offset="0" stop-color="#dbe2ff"/><stop offset=".5" stop-color="#bcc3e2"/><stop offset="1" stop-color="#868aa1"/></linearGradient>
          <radialGradient id="spot" gradientUnits="userSpaceOnUse" cx="345" cy="325" r="115"><stop offset="0" stop-color="#fff"/><stop offset=".35" stop-color="#e6ebff"/><stop offset="1" stop-color="#9a9fbc"/></radialGradient>
          <linearGradient id="arm" gradientUnits="userSpaceOnUse" x1="480" y1="130" x2="540" y2="290"><stop offset="0" stop-color="#f4f7ff"/><stop offset=".4" stop-color="#fafcff"/><stop offset="1" stop-color="#9ba0bd"/></linearGradient>
          <linearGradient id="arm2" gradientUnits="userSpaceOnUse" x1="350" y1="210" x2="450" y2="320"><stop offset="0" stop-color="#dbe2ff"/><stop offset=".5" stop-color="#e9eeff"/><stop offset="1" stop-color="#a8aecd"/></linearGradient>
          <radialGradient id="dent" gradientUnits="userSpaceOnUse" cx="205" cy="160" r="90"><stop offset="0" stop-color="#6d6f80"/><stop offset=".8" stop-color="#c4cae8"/><stop offset="1" stop-color="#d2d9f6"/></radialGradient>
        </defs>

        <!-- body silhouette -->
        <path class="ol" fill="#ccd3f1" d="M717 629L718 540C718 530 728 523 742 521L835 492L832 491V470C832 460 845 454 854 453L963 407L960 406V393C961 384 970 379 980 378L1087 331L1085 331V320C1085 309 1093 303 1102 302L1210 256Q1220 252 1226 261L1250 328L1255 340L1276 436Q1277 442 1267 442L1252 440L1273 531Q1274 539 1265 538L1256 537L1276 628Q1277 635 1267 635L1259 634L1279 713Q1279 720 1267 720L1077 689L723 633Q717 633 717 629z"/>
        <!-- front face -->
        <path class="ol" fill="#717385" d="M724 543L1245 626L1267 720L723 633z"/>
        <path fill="url(#colL)" class="ol" d="M718 540L724 543L723 633Q717 633 717 629z"/>
        <path class="ol" fill="url(#frontF)" d="M750 522L1230 599C1238 604 1244 614 1245 626L724 543C724 533 735 524 750 522z"/>
        <!-- top face -->
        <path class="ol" fill="#dbe2ff" d="M750 522L926 466L860 455L1022 385L987 379L1152 309L1112 302L1209 262L1232 322L1191 316L1229 417L1193 412L1233 515L1163 504L1230 599z"/>

        <!-- left branches -->
        <g transform="translate(700 240) scale(.33333)">
          <path class="ol3" fill="url(#capV)" d="M463 644L677 678C600 682 500 695 490 722L410 708C410 680 430 655 463 644z"/>
          <path class="ol3" fill="#717385" d="M410 708L490 722L410 750z"/>
          <path class="ol3" fill="url(#colL)" d="M395 702L410 708V750L395 754z"/>
          <path class="ln3" d="M490 722C510 705 580 690 677 678M500 724L677 678"/>
          <path class="ol3" fill="url(#capV)" d="M850 416L967 434C900 440 820 450 811 487L797 483C797 455 820 430 850 416z"/>
          <path class="ol3" fill="url(#colL)" d="M781 478L811 487V490L781 500z"/>
          <path class="ln3" d="M797 480V494M811 487C830 470 880 455 967 434"/>
        </g>

        <!-- right branches -->
        <g transform="translate(1000 240) scale(.33333)">
          <path class="ol3" fill="url(#capV)" d="M320 186L455 208C400 212 300 225 298 262L271 252C271 225 290 196 320 186z"/>
          <path class="ol3" fill="url(#colL)" d="M256 244L298 256V262L256 276z"/>
          <path class="ln3" d="M271 250V270M298 258C320 240 380 225 455 208"/>
          <path class="ol3" fill="url(#strip)" d="M628 65Q650 45 678 62L750 265C740 255 720 248 697 245z"/>

          <path class="ol3" fill="url(#strip)" d="M573 227L663 335L757 575C745 550 715 535 688 530z"/>
          <path class="ol3" fill="url(#inner)" d="M663 335Q670 320 703 318L752 570z"/>
          <path class="ol3" fill="#717385" d="M703 318L727 322L790 604L760 600L752 570z"/>
          <path class="ol3" fill="url(#col)" d="M727 322Q755 325 767 305L828 588Q830 606 800 606L790 604z"/>
          <path class="ol3" fill="url(#capV)" d="M573 227L697 245C715 265 725 290 727 322L703 318C695 285 640 250 573 227z"/>
          <path class="ol3" fill="url(#ballG)" d="M697 245C735 250 760 275 767 305Q755 327 727 322C725 290 715 265 697 245z"/>
          <path class="ol3" fill="#edf1ff" d="M573 227C640 250 695 285 703 318Q675 318 663 335z"/>

          <path class="ol3" fill="url(#strip)" d="M580 517L668 628L762 870C745 845 720 830 698 825z"/>
          <path class="ol3" fill="url(#inner)" d="M668 628Q680 612 707 610L758 858z"/>
          <path class="ol3" fill="#717385" d="M707 610L720 612L780 890L768 888L758 858z"/>
          <path class="ol3" fill="url(#col)" d="M720 612Q750 614 757 597L821 878Q822 895 795 895L780 892z"/>
          <path class="ol3" fill="url(#capV)" d="M580 517L690 533C710 555 718 580 720 612L707 610C695 580 640 540 580 517z"/>
          <path class="ol3" fill="url(#ballG)" d="M690 533C728 540 752 565 757 597Q748 614 720 612C718 580 710 555 690 533z"/>
          <path class="ol3" fill="#edf1ff" d="M580 517C640 540 695 580 707 610Q680 612 668 628z"/>

          <path class="ol3" fill="url(#strip)" d="M488 792L611 908L762 1125C745 1100 720 1082 690 1077z"/>
          <path class="ol3" fill="#717385" d="M648 891L727 903L785 1182L778 1182L765 1130L672 995z"/>
          <path class="ol3" fill="url(#inner)" d="M611 906Q625 890 648 891L672 995z"/>
          <path class="ol3" fill="url(#col)" d="M727 903Q755 903 765 885L826 1165Q828 1186 800 1185L785 1183z"/>
          <path class="ol3" fill="url(#capV)" d="M488 792L698 825C715 845 725 870 727 903L640 890C640 875 560 820 488 792z"/>
          <path class="ol3" fill="url(#ballG)" d="M698 825C735 832 760 855 765 885Q755 903 727 903C725 870 715 845 698 825z"/>
          <path class="ol3" fill="#edf1ff" d="M488 792C560 820 625 860 645 884Q625 890 611 906z"/>

          <path class="ol3" fill="url(#col)" d="M735 1158Q760 1158 768 1138L838 1420Q838 1441 800 1440z"/>
          <path class="ol3" fill="url(#ballG)" d="M690 1077C735 1085 762 1108 768 1138Q760 1160 735 1158C728 1125 712 1095 690 1077z"/>
        </g>

        <!-- trunk -->
        <g transform="translate(860 560) scale(.33333)">
          <path class="ol3" fill="#717385" d="M132 365L140 498Q145 530 203 538L310 554C370 565 420 550 452 513L512 432C540 400 580 380 653 387L628 245L430 200L200 200L147 168L152 280Q130 310 132 365z"/>
          <path class="ol3" fill="url(#colL)" d="M132 360Q145 390 193 398L202 538Q140 528 140 498z"/>
          <path class="ol3" fill="url(#col)" d="M287 414Q370 422 430 370L452 513C420 550 370 565 310 554z"/>
          <path class="ol3" fill="#9ca2ba" d="M430 370L487 290L510 432L452 513z"/>
          <path class="ol3" fill="url(#sweep)" d="M487 290C510 262 550 240 628 245L653 387C580 380 540 400 510 432z"/>
          <path class="ol3" fill="url(#col)" d="M147 168Q190 172 207 203L152 280z"/>
          <path class="ol3" fill="url(#dent)" d="M147 168C190 125 225 100 302 109C302 145 295 160 282 176C250 172 225 180 207 203Q190 172 147 168z"/>
          <path class="ol3" fill="#dbe2ff" d="M302 109L450 132Q400 155 378 192L320 270L224 256L282 176C298 155 302 140 302 109z"/>
          <path class="ol3" fill="url(#strip)" d="M207 203C225 180 250 172 282 176L224 256Q180 252 155 278z"/>
          <path class="ol3" fill="url(#arm)" d="M450 132C520 145 570 190 628 245C550 240 510 262 487 290C475 235 430 200 378 192Q400 155 450 132z"/>
          <path class="ol3" fill="url(#arm2)" d="M378 192C430 200 475 235 487 290L430 370C425 320 380 280 320 270z"/>
          <path class="ol3" fill="url(#dome)" d="M132 360C125 290 160 252 224 256C200 300 192 340 193 398Q145 390 132 360z"/>
          <path class="ol3" fill="url(#dome)" d="M224 256L320 270C290 310 285 360 287 414L193 398C192 340 200 300 224 256z"/>
          <path class="ol3" fill="url(#spot)" d="M320 270C380 280 425 320 430 370Q370 422 287 414C285 360 290 310 320 270z"/>
        </g>

        <!-- sketch plane -->
        <path fill="none" stroke="#808080" stroke-width="2.400" d="M916 290L1566 394L1271 795L621 691z"/>
        <g fill="#808080"><circle cx="916" cy="290" r="3"/><circle cx="1566" cy="394" r="3"/><circle cx="1271" cy="795" r="3"/><circle cx="621" cy="691" r="3"/></g>

        <!-- axis triad -->
        <path d="M324 910L321 891" stroke="#176117" stroke-width="4"/><path d="M320 880L326 889Q320 894 315 890z" fill="#2f9a35" stroke="#145214"/>
        <path d="M324 910L347 913" stroke="#b31515" stroke-width="4"/><path d="M357 915L346 919Q343 913 346 908z" fill="#e33" stroke="#8a1111"/>
        <path d="M324 909L315 922" stroke="#14148c" stroke-width="4"/><path d="M307 930L309 920Q314 919 318 927z" fill="#2222d8" stroke="#0c0c80"/>
        <g class="axis"><text x="315" y="878" fill="#008000">Y</text><text x="357" y="921" fill="#f00">X</text><text x="302" y="939" fill="#00f">Z</text></g>
      </svg>
      <button class="splitter" aria-label="Collapse panel"><i class="dot"></i></button>
      <nav class="task-pane">
        <button class="active" aria-label="Home"><svg class="ic"><use href="#i-home"/></svg></button>
        <button aria-label="Design library"><svg class="ic"><use href="#i-books"/></svg></button>
        <button aria-label="File explorer"><svg class="ic20"><use href="#i-explorer"/></svg></button>
        <button aria-label="View palette"><svg class="ic"><use href="#i-palette"/></svg></button>
        <button aria-label="Appearances"><svg class="ic"><use href="#i-ball"/></svg></button>
        <button aria-label="Custom properties"><svg class="ic"><use href="#i-props"/></svg></button>
        <button aria-label="Forum"><svg class="ic"><use href="#i-forum"/></svg></button>
      </nav>
    </section>
  </main>

  <nav class="sheet-tabs">
    <div class="vcr">
      <button aria-label="First"><svg viewBox="0 0 18 18"><path d="M5 3v12" stroke="#7c7c92" stroke-width="2"/><path d="M13 3v12L6 9z" fill="#7c7c92"/></svg></button>
      <button aria-label="Previous"><svg viewBox="0 0 18 18"><path d="M12 3v12L5 9z" fill="#7c7c92"/></svg></button>
      <button aria-label="Next"><svg viewBox="0 0 18 18"><path d="M6 3v12l7-6z" fill="#7c7c92"/></svg></button>
      <button aria-label="Last"><svg viewBox="0 0 18 18"><path d="M13 3v12" stroke="#7c7c92" stroke-width="2"/><path d="M5 3v12l7-6z" fill="#7c7c92"/></svg></button>
    </div>
    <button class="sheet active">Model</button><button class="sheet">3D Views</button><button class="sheet">Motion Study 1</button>
  </nav>

  <footer class="status">
    <span class="product">SOLIDWORKS Premium 2020 SP0.0</span>
    <span class="mode">Editing Part</span>
    <svg class="ic16"><use href="#i-warn"/></svg>
    <button class="units">MMGS<i class="caret up"></i></button>
    <svg class="ic16"><use href="#i-tag"/></svg>
  </footer>
</div>
</body>
</html>
```

FILE: styles.css
```css
* { box-sizing: border-box; }

body {
  margin: 0;
  height: 100vh;
  overflow: hidden;
  background: #fff;
  color: #111;
  font: 14px/20px "Open Sans", "Noto Sans", sans-serif;
}

button, input {
  margin: 0;
  padding: 0;
  border: 0;
  background: none;
  color: inherit;
  font: inherit;
}

button {
  display: flex;
  align-items: center;
  justify-content: center;
  white-space: nowrap;
}

svg { display: block; flex: none; }
.defs { position: absolute; width: 0; height: 0; }
.ic { width: 18px; height: 18px; }
.ic10 { width: 10px; height: 18px; }
.ic12 { width: 12px; height: 12px; }
.ic12.tall { height: 14px; }
.ic14 { width: 14px; height: 14px; }
.ic16 { width: 16px; height: 16px; }
.ic20 { width: 20px; height: 18px; }
.ic22 { width: 22px; height: 22px; }

.caret {
  width: 0;
  border: 3px solid transparent;
  border-top: 4px solid #444;
  border-bottom: 0;
}
.caret.up { border-top: 0; border-bottom: 4px solid #444; }

.dot {
  width: 6px;
  height: 6px;
  border: 1px solid #888;
  border-radius: 50%;
  background: #ccc;
}

.app {
  display: grid;
  grid-template-rows: 33px 87px 28px minmax(0, 1fr) 21px 24px;
  height: calc(100vh + 9px);
}

/* Title bar */
.title-bar {
  display: flex;
  border-bottom: 1px solid #808080;
  background: #e6e6e6;
}
.menu-side {
  display: flex;
  width: 544px;
  align-items: center;
  border-right: 1px solid #888;
  background: linear-gradient(90deg, #e6e6e6 10px, #f7f7f7 10px);
  box-shadow: 2px 0 3px #aaa;
}
.logo {
  position: relative;
  z-index: 2;
  align-self: flex-start;
  margin-left: 10px;
  border: 1px solid #888;
  border-top: 0;
}
.logo svg { width: 143px; height: 36px; }
.logo-text { font: italic 300 17px "Open Sans", sans-serif; fill: #d9261c; }
.logo-bold { font-weight: 800; }
.menus {
  display: grid;
  grid-template-columns: 36px 39px 45px 51px 47px 66px 40px;
  margin-left: 28px;
  padding-top: 2px;
  font-size: 13px;
}
.menus button { justify-content: flex-start; }
.pin { margin-left: 13px; padding-top: 2px; }

.quick { display: flex; align-items: center; gap: 9px; padding: 2px 0 0 18px; }
.quick button.drop { width: 31px; gap: 7px; }
.quick .select-tool { width: 40px; height: 25px; margin-left: -5px; border: 1px solid #808080; }
.select-tool span { display: grid; place-items: center; width: 26px; height: 23px; border-right: 1px solid #808080; background: #b0b0b0; }
.select-tool .caret { margin: 0 3px; }

.doc-title { flex: 1; margin: auto; padding: 2px 0 0; text-align: center; font-size: 13px; font-weight: 400; }

.title-right { display: flex; align-items: center; gap: 12px; padding: 2px 6px 0 0; }
.search {
  display: flex;
  align-items: center;
  width: 252px;
  height: 29px;
  padding: 0 4px 0 6px;
  gap: 8px;
  border: 1px solid #111;
  background: #ebecf0;
}
.search input { flex: 1; min-width: 0; font-size: 13px; }
.search input::placeholder { color: #666; opacity: 1; }
.search button { gap: 8px; }
.user { width: 14px; height: 18px; }
.help { gap: 11px; font-size: 17px; font-weight: 700; color: #444; }
.win-controls { display: flex; gap: 14px; color: #444; }

/* Ribbon */
.ribbon {
  display: flex;
  padding: 6px 0 2px;
  border-bottom: 1px solid #808080;
  background: #f7f7f7;
  font-size: 13px;
}
.group { display: grid; border-right: 1px solid #c4c4c4; }
.boss { grid-template-columns: 70px 72px 163px; padding-left: 6px; }
.cut { grid-template-columns: 66px 82px 66px 124px; }
.modify { grid-template-columns: 39px 97px 68px 90px; }
.refs { grid-template-columns: 73px 52px; margin-right: 4px; }
.big {
  display: flex;
  flex-direction: column;
  justify-content: flex-start;
  padding-top: 13px;
  line-height: 19px;
  text-align: center;
}
.big .ic { margin-bottom: 2px; }
.big.menu { padding-top: 6px; }
.big .caret { margin-top: 20px; }
.stack { display: grid; grid-template-rows: repeat(3, 26px); padding-left: 2px; }
.stack button { justify-content: flex-start; gap: 7px; }
.instant { width: 72px; padding-top: 12px; border: 1px solid #666; background: #b1b1b1; }

/* Ribbon tabs and view toolbar */
.tab-row { display: flex; background: #fff; }
.tabs {
  display: grid;
  grid-template-columns: 79px 62px 75px 98px 124px 70px 74px 136px 174px;
  color: #333;
}
.tabs button { border: 1px solid #808080; border-width: 0 0 1px 1px; background: #d4d4d4; }
.tabs button:last-child { border-right-width: 1px; }
.tabs .active { margin-top: -1px; padding-top: 1px; border-left: 0; background: #f7f7f7; font-weight: 700; }
.view-tools { display: flex; align-items: center; gap: 8px; padding: 2px 0 0 29px; }
.view-tools .drop { gap: 7px; width: 32px; }
.view-tools .caret { border-top-color: #999; }
.doc-controls { display: flex; align-items: center; gap: 14px; margin-left: auto; padding: 2px 12px 0 0; color: #999; }

/* Workspace */
.workspace { display: grid; grid-template-columns: 273px minmax(0, 1fr); min-height: 0; }
.tree-panel {
  display: flex;
  flex-direction: column;
  min-height: 0;
  border-right: 1px solid #808080;
  border-left: 1px solid #c0c0c0;
  background: #f7f7f7;
}
.handle {
  display: grid;
  place-items: center;
  height: 21px;
  margin: 4px 2px 4px 0;
  border: 1px solid #c4c4c4;
  border-width: 1px 0;
}
.panel-tabs {
  display: grid;
  grid-template-columns: repeat(5, 40px) 24px 23px 22px;
  height: 26px;
  margin-right: 2px;
  border-top: 1px solid #808080;
}
.panel-tabs button { border: 1px solid #808080; border-width: 0 0 1px 1px; background: #d4d4d4; overflow: hidden; }
.panel-tabs .active { padding-left: 4px; border: 0; background: #f7f7f7; }
.panel-tabs .clipped { justify-content: flex-start; padding-left: 10px; }
.panel-tabs .nudge { background: #f7f7f7; }
.tri { border: 4px solid transparent; }
.tri.left { border-right: 5px solid #000; border-left: 0; }
.tri.right { border-left: 5px solid #000; border-right: 0; }
.filter {
  display: flex;
  align-items: center;
  gap: 6px;
  height: 32px;
  margin: 0 5px 0 4px;
  padding-left: 2px;
  border: 1px solid #c4c4c4;
}
.filter input { flex: 1; min-width: 0; }
.tree-root {
  display: flex;
  align-items: center;
  gap: 4px;
  height: 24px;
  margin: 1px 2px 0 0;
  padding-left: 4px;
  overflow: hidden;
  white-space: pre;
}
.tree { margin: 0; padding: 0; list-style: none; }
.tree li {
  display: flex;
  align-items: center;
  gap: 5px;
  height: 24px;
  padding-left: 26px;
}
.tree .more { padding-left: 9px; }
.tree .more::before {
  content: "";
  margin-right: 7px;
  border: 4px solid transparent;
  border-left: 5px solid #555;
  border-right: 0;
}
.rollback { height: 4px; margin-right: 2px; background: #3a8ec2; }
.scroll {
  display: flex;
  align-items: center;
  height: 21px;
  margin: auto 2px 4px 0;
  padding-left: 21px;
  border-top: 1px solid #fff;
  background: #efefef;
}
.scroll i { width: 169px; height: 6px; background: #868686; }

.viewport { position: relative; min-width: 0; background: #fff; }
.scene { width: 100%; height: 100%; }
.ol { stroke: #111; stroke-width: 1.3; stroke-linejoin: round; }
.ol3 { stroke: #111; stroke-width: 4; stroke-linejoin: round; }
.ln3 { fill: none; stroke: #111; stroke-width: 4; }
.axis { font: 12px "Liberation Sans", sans-serif; }

.splitter {
  position: absolute;
  top: 376px;
  left: -1px;
  width: 12px;
  height: 49px;
  padding-right: 2px;
  border: 1px solid #808080;
  border-left: 0;
  background: #f7f7f7;
}
.task-pane {
  position: absolute;
  top: 55px;
  right: 0;
  width: 32px;
  border: 1px solid #808080;
  border-width: 1px 0 0 1px;
}
.task-pane button { width: 100%; height: 30px; border-bottom: 1px solid #808080; background: #d4d4d4; }
.task-pane .active { background: #f7f7f7; }

/* Sheet tabs and status bar */
.sheet-tabs {
  display: flex;
  padding-left: 27px;
  border: 1px solid #808080;
  border-width: 1px 0;
  background: #f7f7f7;
  font-size: 15px;
}
.vcr { display: flex; }
.vcr button { width: 20px; border: 1px solid #85859c; background: #a5a7c0; }
.vcr svg { width: 16px; height: 16px; }
.sheet { width: 144px; padding-right: 8px; border-right: 1px solid #808080; background: #d4d4d4; }
.sheet:nth-child(3) { width: 89px; padding-right: 0; }
.sheet.active { width: 77px; padding: 0; background: #f7f7f7; font-weight: 700; }
.status {
  display: flex;
  align-items: center;
  padding: 3px 2px 0;
  overflow: hidden;
  background: #e6e6e6;
}
.product { flex: 1; }
.mode { width: 105px; }
.units { gap: 26px; margin: 0 28px 0 81px; }
```
